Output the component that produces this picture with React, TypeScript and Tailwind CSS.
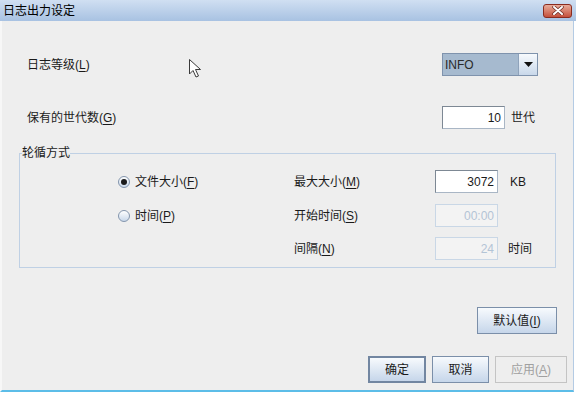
import React from 'react';

const FONT = '"Liberation Sans", "Noto Sans CJK SC", sans-serif';

function Mn({ children }: { children: React.ReactNode }) {
  // mnemonic letter, e.g. (L)
  return (
    <span>
      (<span className="underline underline-offset-2">{children}</span>)
    </span>
  );
}

function TextBox({ value, disabled = false }: { value: string; disabled?: boolean }) {
  return (
    <div
      className={`w-[63px] h-[23px] flex items-center justify-end pr-[3px] text-[12px] border ${
        disabled
          ? 'bg-[#f3f3f3] border-[#c9d7e6] text-[#b3c4d6]'
          : 'bg-white border-[#a9b6c5] border-t-[#7d8894] border-l-[#7d8894] text-[#1a1a1a]'
      }`}
    >
      {value}
    </div>
  );
}

function Radio({ checked, label }: { checked: boolean; label: React.ReactNode }) {
  return (
    <div className="flex items-center gap-[5px]">
      <span className="w-[12px] h-[12px] rounded-full border border-[#8395ad] bg-linear-to-b from-white to-[#c9d8ea] flex items-center justify-center">
        {checked && <span className="w-[6px] h-[6px] rounded-full bg-[#1a1a1a]" />}
      </span>
      <span>{label}</span>
    </div>
  );
}

function Btn({
  children,
  w,
  variant = 'normal',
}: {
  children: React.ReactNode;
  w: string;
  variant?: 'normal' | 'default' | 'disabled';
}) {
  const cls =
    variant === 'disabled'
      ? 'bg-[#eeeeee] border border-[#c4c4c4] text-[#a0a0a0]'
      : variant === 'default'
      ? 'bg-linear-to-b from-[#f7fafd] to-[#c6d6ea] border-2 border-[#7286a1] text-[#1a1a1a]'
      : 'bg-linear-to-b from-[#f7fafd] to-[#c6d6ea] border border-[#7b8fa9] text-[#1a1a1a]';
  return (
    <div className={`${w} h-[27px] flex items-center justify-center text-[12px] ${cls}`}>
      {children}
    </div>
  );
}

export default function App() {
  return (
    <div
      className="w-[576px] h-[394px] bg-white flex flex-col text-[12px] leading-[16px] text-[#1a1a1a]"
      style={{ fontFamily: FONT }}
    >
      {/* title bar */}
      <div className="h-[21px] shrink-0 bg-linear-to-b from-[#d0dff2] to-[#a8c2e2] flex items-center justify-between pl-[3px] pr-[4px]">
        <span className="text-[12px] text-black">日志出力设定</span>
        <div className="w-[29px] h-[14px] rounded-[3px] border border-[#8a2c20] bg-linear-to-b from-[#e7ab9a] to-[#c44f3b] flex items-center justify-center">
          <svg width="12" height="9" viewBox="0 0 12 9">
            <path d="M2 1 L10 8 M10 1 L2 8" stroke="#6b2a22" strokeWidth="3.4" strokeLinecap="round" />
            <path d="M2 1 L10 8 M10 1 L2 8" stroke="#ffffff" strokeWidth="2" strokeLinecap="round" />
          </svg>
        </div>
      </div>

      {/* body */}
      <div className="relative flex-1 flex flex-col bg-[#eeeeee] border-l-2 border-l-[#f7f7f7] border-r border-r-[#b4cbe4] border-b-2 border-b-[#5cbde8] mr-[2px] mb-[2px] pl-[17px]">
        {/* mouse pointer */}
        <svg className="absolute left-[186px] top-[37px]" width="16" height="21" viewBox="0 0 16 21">
          <path
            d="M1.5 1.5 L1.5 16 L5 12.5 L8 19 L10.5 18 L7.5 11.5 L12.5 11.5 Z"
            fill="#ffffff"
            stroke="#3a3a3a"
            strokeWidth="1"
            strokeLinejoin="round"
          />
        </svg>

        <div className="flex items-center h-[23px] mt-[32px] pl-[8px]">
          <span className="w-[415px]">
            日志等级<Mn>L</Mn>
          </span>
          <div className="flex h-[23px] w-[96px] border border-[#7f93ad]">
            <div className="flex-1 bg-[#a6bacf] flex items-center pl-[2px] text-[#2a2a2a]">INFO</div>
            <div className="w-[19px] border-l border-[#8fa3bb] bg-linear-to-b from-[#f7fafd] to-[#c9d8ea] flex items-center justify-center">
              <svg width="9" height="5" viewBox="0 0 9 5">
                <path d="M0 0 L9 0 L4.5 5 Z" fill="#111" />
              </svg>
            </div>
          </div>
        </div>

        <div className="flex items-center h-[23px] mt-[30px] pl-[8px]">
          <span className="w-[415px]">
            保有的世代数<Mn>G</Mn>
          </span>
          <TextBox value="10" />
          <span className="ml-[6px]">世代</span>
        </div>

        <fieldset className="w-[537px] mt-[16px] border border-[#bfd0e4] pt-[9px] pb-[7px]">
          <legend className="ml-[2px] leading-[16px]">轮循方式</legend>

          <div className="flex flex-col gap-[10px] pl-[98px]">
            <div className="flex items-center h-[23px]">
              <div className="w-[176px]">
                <Radio checked label={<>文件大小<Mn>F</Mn></>} />
              </div>
              <span className="w-[141px]">
                最大大小<Mn>M</Mn>
              </span>
              <TextBox value="3072" />
              <span className="ml-[12px]">KB</span>
            </div>

            <div className="flex items-center h-[23px] mt-[1px]">
              <div className="w-[176px]">
                <Radio checked={false} label={<>时间<Mn>P</Mn></>} />
              </div>
              <span className="w-[141px]">
                开始时间<Mn>S</Mn>
              </span>
              <TextBox value="00:00" disabled />
            </div>

            <div className="flex items-center h-[23px]">
              <div className="w-[176px]" />
              <span className="w-[141px]">
                间隔<Mn>N</Mn>
              </span>
              <TextBox value="24" disabled />
              <span className="ml-[10px]">时间</span>
            </div>
          </div>
        </fieldset>

        <div className="flex justify-end mt-[39px] pr-[16px]">
          <Btn w="w-[80px]">
            默认值<Mn>I</Mn>
          </Btn>
        </div>

        <div className="flex justify-end gap-[6px] mt-[22px] pr-[6px]">
          <Btn w="w-[58px]" variant="default">
            确定
          </Btn>
          <Btn w="w-[57px]">取消</Btn>
          <Btn w="w-[72px]" variant="disabled">
            应用<Mn>A</Mn>
          </Btn>
        </div>
      </div>
    </div>
  );
}
